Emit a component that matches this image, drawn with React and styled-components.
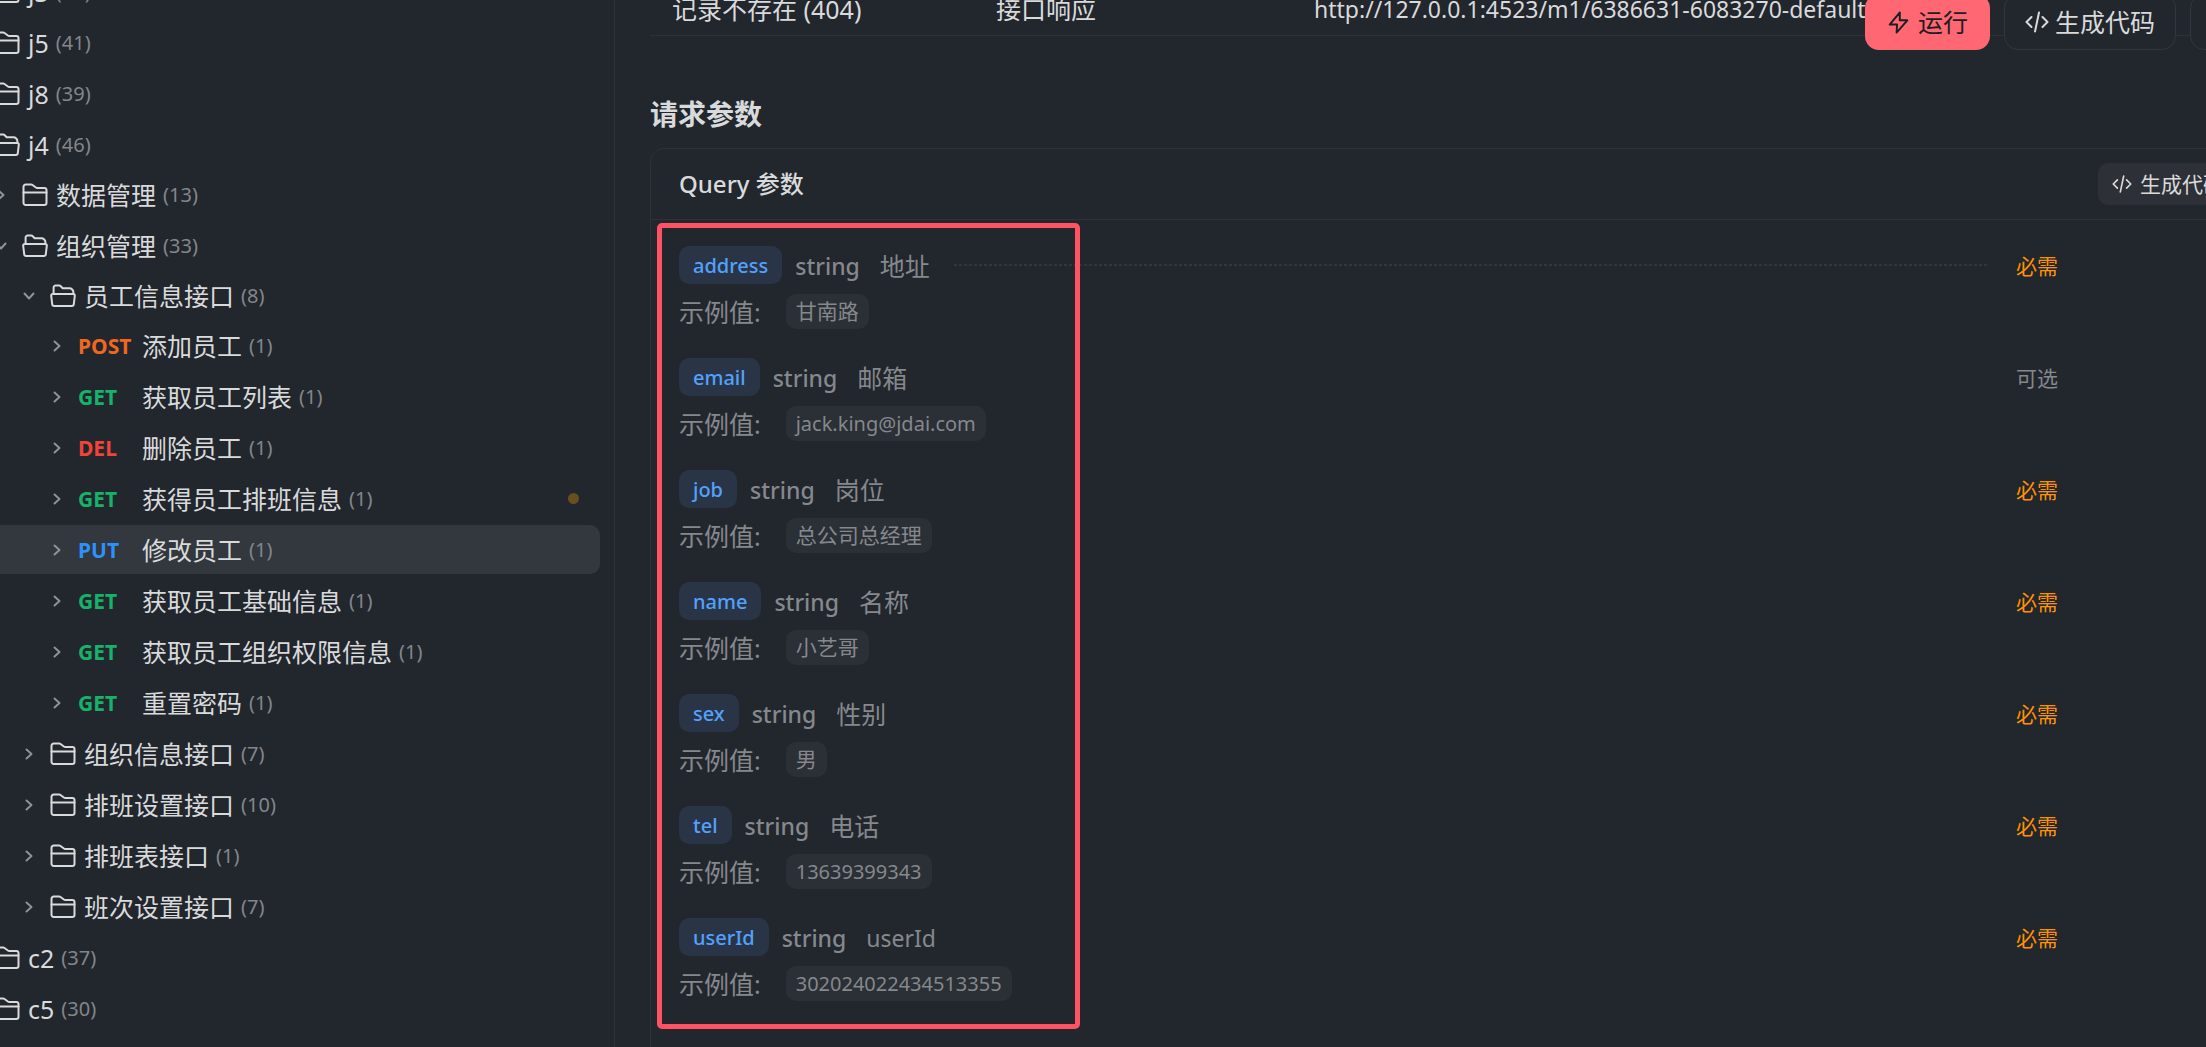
import React from 'react'
import styled, { createGlobalStyle, css } from 'styled-components'

const tree = [
  { name: 'j3', count: 37 },
  { name: 'j5', count: 41 },
  { name: 'j8', count: 39 },
  {
    name: 'j4',
    count: 46,
    children: [
      { name: '数据管理', count: 13 },
      {
        name: '组织管理',
        count: 33,
        children: [
          {
            name: '员工信息接口',
            count: 8,
            children: [
              { method: 'POST', name: '添加员工', count: 1 },
              { method: 'GET', name: '获取员工列表', count: 1 },
              { method: 'DEL', name: '删除员工', count: 1 },
              { method: 'GET', name: '获得员工排班信息', count: 1, dot: true },
              { method: 'PUT', name: '修改员工', count: 1, active: true },
              { method: 'GET', name: '获取员工基础信息', count: 1 },
              { method: 'GET', name: '获取员工组织权限信息', count: 1 },
              { method: 'GET', name: '重置密码', count: 1 },
            ],
          },
          { name: '组织信息接口', count: 7 },
          { name: '排班设置接口', count: 10 },
          { name: '排班表接口', count: 1 },
          { name: '班次设置接口', count: 7 },
        ],
      },
    ],
  },
  { name: 'c2', count: 37 },
  { name: 'c5', count: 30 },
  { name: 'c6', count: 28 },
]

const params = [
  { name: 'address', label: '地址', example: '甘南路', required: true, line: true },
  { name: 'email', label: '邮箱', example: 'jack.king@jdai.com' },
  { name: 'job', label: '岗位', example: '总公司总经理', required: true },
  { name: 'name', label: '名称', example: '小艺哥', required: true },
  { name: 'sex', label: '性别', example: '男', required: true },
  { name: 'tel', label: '电话', example: '13639399343', required: true },
  { name: 'userId', label: 'userId', example: '302024022434513355', required: true },
]

const methodColors = {
  POST: '#ef6820',
  GET: '#17b26a',
  DEL: '#f04438',
  PUT: '#2e90fa',
}

const isLatin = (text) => /^[\x20-\x7e]+$/.test(text)

const FolderIcon = ({ open }) => (
  <Glyph viewBox="0 0 26 26" $size={26} $color="#d9dadb">
    {open ? (
      <>
        <path d="M3.6 11V4.600a2 2 0 0 1 2-2h3.700a2 2 0 0 1 1.400.600l2 2.100h6.700a4 4 0 0 1 4 4V11" />
        <path d="M2.800 11h20.400a1.600 1.600 0 0 1 1.600 1.800l-1 8.400a2 2 0 0 1-2 1.800H4.200a2 2 0 0 1-2-1.800l-1-8.400A1.600 1.600 0 0 1 2.800 11z" />
      </>
    ) : (
      <>
        <path d="M1.500 4.800a2.200 2.200 0 0 1 2.200-2.200h5.500a2.200 2.200 0 0 1 1.300.400l3.400 2.500a2.200 2.200 0 0 0 1.300.400h7.100a2.200 2.200 0 0 1 2.200 2.200v12.700a2.200 2.200 0 0 1-2.200 2.200H3.700a2.200 2.200 0 0 1-2.200-2.200z" />
        <path d="M1.500 10.500h23" />
      </>
    )}
  </Glyph>
)

const ChevronIcon = ({ open }) => (
  <Glyph viewBox="0 0 12 12" $size={12} $color="#8f9296">
    <path d={open ? 'M1.500 3.500 6 8.500l4.500-5' : 'M3.500 1.500l5 4.500-5 4.500'} />
  </Glyph>
)

const BoltIcon = () => (
  <Glyph viewBox="0 0 22 24" $size={23} $color="#1d1e22">
    <path d="M12.400 1.500 1.800 14.100h7.700L9 22.500 20.200 9.700h-7.900z" />
  </Glyph>
)

const CodeIcon = ({ size }) => (
  <Glyph viewBox="0 0 24 24" $size={size} $color="#d9dadb">
    <path d="M6.500 7 1.500 12l5 5M17.500 7l5 5-5 5M14 2.500l-4 19" />
  </Glyph>
)

const TreeItem = ({ item, level = 0 }) => (
  <Item>
    <TreeRow $level={level} $active={item.active}>
      <Toggle type="button" aria-label={item.name}>
        <ChevronIcon open={!!item.children} />
      </Toggle>
      {item.method ? (
        <Method $color={methodColors[item.method]}>{item.method}</Method>
      ) : (
        <FolderIcon open={!!item.children} />
      )}
      <Name>{item.name}</Name>
      <Count>({item.count})</Count>
      {item.dot && <Dot />}
    </TreeRow>
    {item.children && (
      <TreeList>
        {item.children.map((child) => (
          <TreeItem key={child.name} item={child} level={level + 1} />
        ))}
      </TreeList>
    )}
  </Item>
)

const App = () => (
  <>
    <GlobalStyle />
    <Page>
      <Sidebar>
        <TreeList>
          {tree.map((item) => (
            <TreeItem key={item.name} item={item} />
          ))}
        </TreeList>
      </Sidebar>
      <Main>
        <Toolbar>
          <RunButton type="button">
            <BoltIcon />
            运行
          </RunButton>
          <OutlineButton type="button">
            <CodeIcon size={24} />
            生成代码
          </OutlineButton>
          <OutlineButton type="button" aria-label="更多" />
        </Toolbar>
        <ResponseRow>
          <span>记录不存在 (404)</span>
          <span>接口响应</span>
          <Url href="#mock">http://127.0.0.1:4523/m1/6386631-6083270-default</Url>
        </ResponseRow>
        <Title>请求参数</Title>
        <Card>
          <CardHeader>
            <CardTitle>Query 参数</CardTitle>
            <SmallButton type="button">
              <CodeIcon size={20} />
              生成代码
            </SmallButton>
          </CardHeader>
          <ParamList>
            <Highlight />
            {params.map((param) => (
              <Param key={param.name}>
                <ParamHead>
                  <Tag>{param.name}</Tag>
                  <Type>string</Type>
                  <Label $latin={isLatin(param.label)}>{param.label}</Label>
                  <Rule $visible={param.line} />
                  <Need $required={param.required}>
                    {param.required ? '必需' : '可选'}
                  </Need>
                </ParamHead>
                <Example>
                  示例值:
                  <Value $latin={isLatin(param.example)}>{param.example}</Value>
                </Example>
              </Param>
            ))}
          </ParamList>
        </Card>
      </Main>
    </Page>
  </>
)

const GlobalStyle = createGlobalStyle`
  * {
    box-sizing: border-box;
  }

  body {
    margin: 0;
    overflow: hidden;
    background: #22262d;
    color: #d9dadb;
    font-family: 'Noto Sans', 'Noto Sans CJK SC', sans-serif;
    font-size: 25px;
    line-height: 36px;
  }

  button {
    font: inherit;
    color: inherit;
    cursor: pointer;
  }
`

const Page = styled.div`
  display: flex;
  height: 100vh;
  overflow: hidden;
`

const Glyph = styled.svg`
  flex: none;
  width: ${(p) => p.$size}px;
  height: ${(p) => p.$size}px;
  fill: none;
  stroke: ${(p) => p.$color};
  stroke-width: 2;
  stroke-linecap: round;
  stroke-linejoin: round;
`

const TreeList = styled.ul`
  display: flex;
  flex-direction: column;
  gap: 2px;
  margin: 0;
  padding: 0;
  list-style: none;
`

// the tree is scrolled a little down and to the right
const Sidebar = styled.nav`
  flex: none;
  width: 615px;
  padding-right: 14px;
  border-right: 1px solid #2e3138;
  overflow: hidden;

  > ${TreeList} {
    margin: -33px 0 0 -33px;
  }
`

const Item = styled.li`
  display: flex;
  flex-direction: column;
  gap: 1px;
`

const TreeRow = styled.div`
  display: flex;
  align-items: center;
  height: 49px;
  padding-left: ${(p) => p.$level * 28}px;
  padding-right: 21px;
  border-radius: 10px;
  white-space: nowrap;
  background: ${(p) => (p.$active ? '#33373e' : 'transparent')};
`

const Toggle = styled.button`
  display: flex;
  padding: 0;
  margin-right: 15px;
  border: 0;
  background: none;
`

const Method = styled.span`
  width: 64px;
  font-size: 21px;
  font-weight: 700;
  color: ${(p) => p.$color};
`

const Name = styled.span`
  ${Glyph} + & {
    margin-left: 8px;
  }
`

const Count = styled.span`
  margin-left: 7px;
  font-size: 20px;
  color: #82868b;
`

const Dot = styled.span`
  width: 11px;
  height: 11px;
  margin-left: auto;
  border-radius: 50%;
  background: #67501e;
`

const Main = styled.main`
  position: relative;
  flex: 1;
  min-width: 0;
  padding-left: 35px;
`

const Toolbar = styled.div`
  position: absolute;
  top: -6px;
  right: -30px;
  display: flex;
  gap: 14px;
`

const toolButton = css`
  display: flex;
  align-items: center;
  flex: none;
  height: 56px;
  border-radius: 14px;
  white-space: nowrap;
`

const RunButton = styled.button`
  ${toolButton}
  gap: 8px;
  padding: 0 22px;
  border: 0;
  background: #ff6772;
  color: #1d1e22;
`

const OutlineButton = styled.button`
  ${toolButton}
  gap: 6px;
  min-width: 46px;
  padding: 0 20px;
  border: 1px solid #33363e;
  background: #22262d;
`

const ResponseRow = styled.div`
  display: grid;
  grid-template-columns: 324px 318px 1fr;
  height: 36px;
  padding: 0 22px;
  border-bottom: 1px solid #2e3138;
  line-height: 18px;
  white-space: nowrap;
`

const Url = styled.a`
  color: inherit;
  font-size: 23px;
  text-decoration: none;
`

const Title = styled.h2`
  margin: 58px 0 14px;
  font-size: 28px;
  line-height: 40px;
`

const Card = styled.section`
  margin-right: -61px;
  border: 1px solid #2e3138;
  border-radius: 14px;
`

const CardHeader = styled.header`
  display: flex;
  align-items: center;
  justify-content: space-between;
  height: 71px;
  padding: 0 28px;
  border-bottom: 1px solid #2e3138;
`

const CardTitle = styled.h3`
  margin: 0;
  font-size: 24px;
  font-weight: 500;
`

const SmallButton = styled.button`
  display: flex;
  align-items: center;
  flex: none;
  height: 42px;
  gap: 8px;
  padding: 0 14px;
  border: 0;
  border-radius: 10px;
  background: #2d3137;
  font-size: 21px;
  white-space: nowrap;
`

const ParamList = styled.div`
  position: relative;
  display: flex;
  flex-direction: column;
  gap: 29px;
  padding: 26px 28px 60px;
`

const Highlight = styled.div`
  position: absolute;
  top: 3px;
  left: 6px;
  width: 423px;
  height: 806px;
  border: 5px solid #ff5262;
  border-radius: 5px;
`

const Param = styled.div`
  display: flex;
  flex-direction: column;
  gap: 10px;
`

const ParamHead = styled.div`
  display: flex;
  align-items: flex-end;
  height: 38px;
`

const Tag = styled.span`
  padding: 2px 14px 0;
  border-radius: 10px;
  background: #293547;
  color: #53a1fd;
  font-size: 20px;
  font-weight: 500;
`

const Type = styled.span`
  margin-left: 13px;
  color: #85888c;
  font-size: 23px;
  font-weight: 500;
`

const Label = styled.span`
  margin-left: 20px;
  color: #85888c;
  font-size: ${(p) => (p.$latin ? 23 : 25)}px;
`

const Rule = styled.span`
  flex: 1;
  align-self: center;
  height: 2px;
  margin: 0 29px 0 24px;
  background: ${(p) =>
    p.$visible
      ? 'repeating-linear-gradient(90deg, #32353c 0 3px, transparent 3px 5px)'
      : 'none'};
`

const Need = styled.span`
  width: 222px;
  color: ${(p) => (p.$required ? '#ff9200' : '#85888c')};
  font-size: 21px;
`

const Example = styled.div`
  display: flex;
  align-items: center;
  gap: 25px;
  height: 35px;
  color: #85888c;
`

const Value = styled.span`
  padding: 0 10px;
  border-radius: 10px;
  background: #2b2f36;
  font-size: ${(p) => (p.$latin ? 20 : 21)}px;
  line-height: 35px;
`

export default App
